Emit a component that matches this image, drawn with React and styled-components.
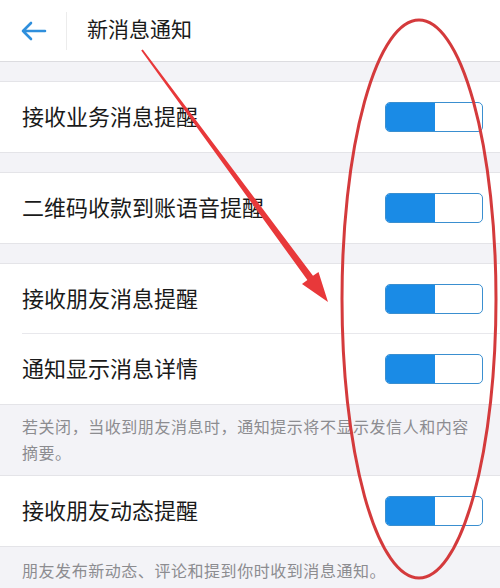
import styled, { createGlobalStyle } from "styled-components";

const GlobalStyle = createGlobalStyle`
  html, body {
    margin: 0;
    padding: 0;
    background: #f3f3f7;
  }
  body {
    font-family: "Noto Sans CJK SC", "Noto Sans", sans-serif;
  }
`;

const Page = styled.div`
  position: relative;
  width: 500px;
  height: 588px;
  overflow: hidden;
  background: #f3f3f7;
`;

const Header = styled.div`
  height: 62px;
  display: flex;
  align-items: center;
  background: #fff;
  border-bottom: 1px solid #dcdce0;
  box-sizing: border-box;
`;

const BackButton = styled.div`
  width: 66px;
  height: 100%;
  display: flex;
  align-items: center;
  padding-left: 21px;
  box-sizing: border-box;
`;

const HeaderDivider = styled.div`
  width: 1px;
  height: 38px;
  background: #ececec;
`;

const Title = styled.div`
  margin-left: 20px;
  font-size: 21px;
  color: #1a1a1a;
  margin-top: -5px;
`;

const Gap = styled.div`
  height: ${(p) => p.h || 19}px;
  border-bottom: 1px solid #e4e4e8;
`;

const Group = styled.div`
  background: #fff;
  border-bottom: 1px solid #e4e4e8;
`;

const Row = styled.div`
  height: 70px;
  display: flex;
  align-items: center;
  justify-content: space-between;
  padding: 0 17px 0 22px;
  box-sizing: border-box;
  position: relative;
  ${(p) =>
    p.divider &&
    `
    &::after {
      content: "";
      position: absolute;
      left: 22px;
      right: 0;
      bottom: 0;
      height: 1px;
      background: #e8e8ec;
    }
  `}
`;

const Label = styled.span`
  font-size: 22px;
  color: #1a1a1a;
  margin-top: -4px;
`;

const Toggle = styled.div`
  width: 98px;
  height: 30px;
  border-radius: 5px;
  border: 1.5px solid #3a8fd0;
  box-sizing: border-box;
  display: flex;
  overflow: hidden;
  background: #fff;
`;

const ToggleFill = styled.div`
  width: 49px;
  height: 100%;
  background: #1a8be6;
`;

const Note = styled.div`
  padding: ${(p) => p.pad || "8px 22px 10px"};
  font-size: 16px;
  letter-spacing: 0.55px;
  line-height: 26px;
  color: #8c8c90;
  border-bottom: ${(p) => (p.last ? "none" : "1px solid #e4e4e8")};
`;

const Overlay = styled.svg`
  position: absolute;
  left: 0;
  top: 0;
  pointer-events: none;
`;

const Switch = () => (
  <Toggle>
    <ToggleFill />
  </Toggle>
);

const BackArrow = () => (
  <svg width="26" height="20" viewBox="0 0 26 20" fill="none">
    <path
      d="M2 10H24M10 2L2 10L10 18"
      stroke="#2f8fdc"
      strokeWidth="2.6"
      strokeLinecap="round"
      strokeLinejoin="round"
    />
  </svg>
);

export default function App() {
  return (
    <>
      <GlobalStyle />
      <Page>
        <Header>
          <BackButton>
            <BackArrow />
          </BackButton>
          <HeaderDivider />
          <Title>新消息通知</Title>
        </Header>
        <Gap />
        <Group>
          <Row>
            <Label>接收业务消息提醒</Label>
            <Switch />
          </Row>
        </Group>
        <Gap />
        <Group>
          <Row>
            <Label>二维码收款到账语音提醒</Label>
            <Switch />
          </Row>
        </Group>
        <Gap />
        <Group>
          <Row divider>
            <Label>接收朋友消息提醒</Label>
            <Switch />
          </Row>
          <Row>
            <Label>通知显示消息详情</Label>
            <Switch />
          </Row>
        </Group>
        <Note>若关闭，当收到朋友消息时，通知提示将不显示发信人和内容摘要。</Note>
        <Group>
          <Row>
            <Label>接收朋友动态提醒</Label>
            <Switch />
          </Row>
        </Group>
        <Note last pad="10px 22px">
          朋友发布新动态、评论和提到你时收到消息通知。
        </Note>

        <Overlay width="500" height="588" viewBox="0 0 500 588">
          <ellipse
            cx="419"
            cy="299"
            rx="77"
            ry="279"
            fill="none"
            stroke="#d43a3c"
            strokeWidth="3"
          />
          <polygon
            points="141.2,50.6 307.4,280 302,284 328,302 318.5,272 313,275.8 142.8,49.4"
            fill="#e8383a"
          />
        </Overlay>
      </Page>
    </>
  );
}
